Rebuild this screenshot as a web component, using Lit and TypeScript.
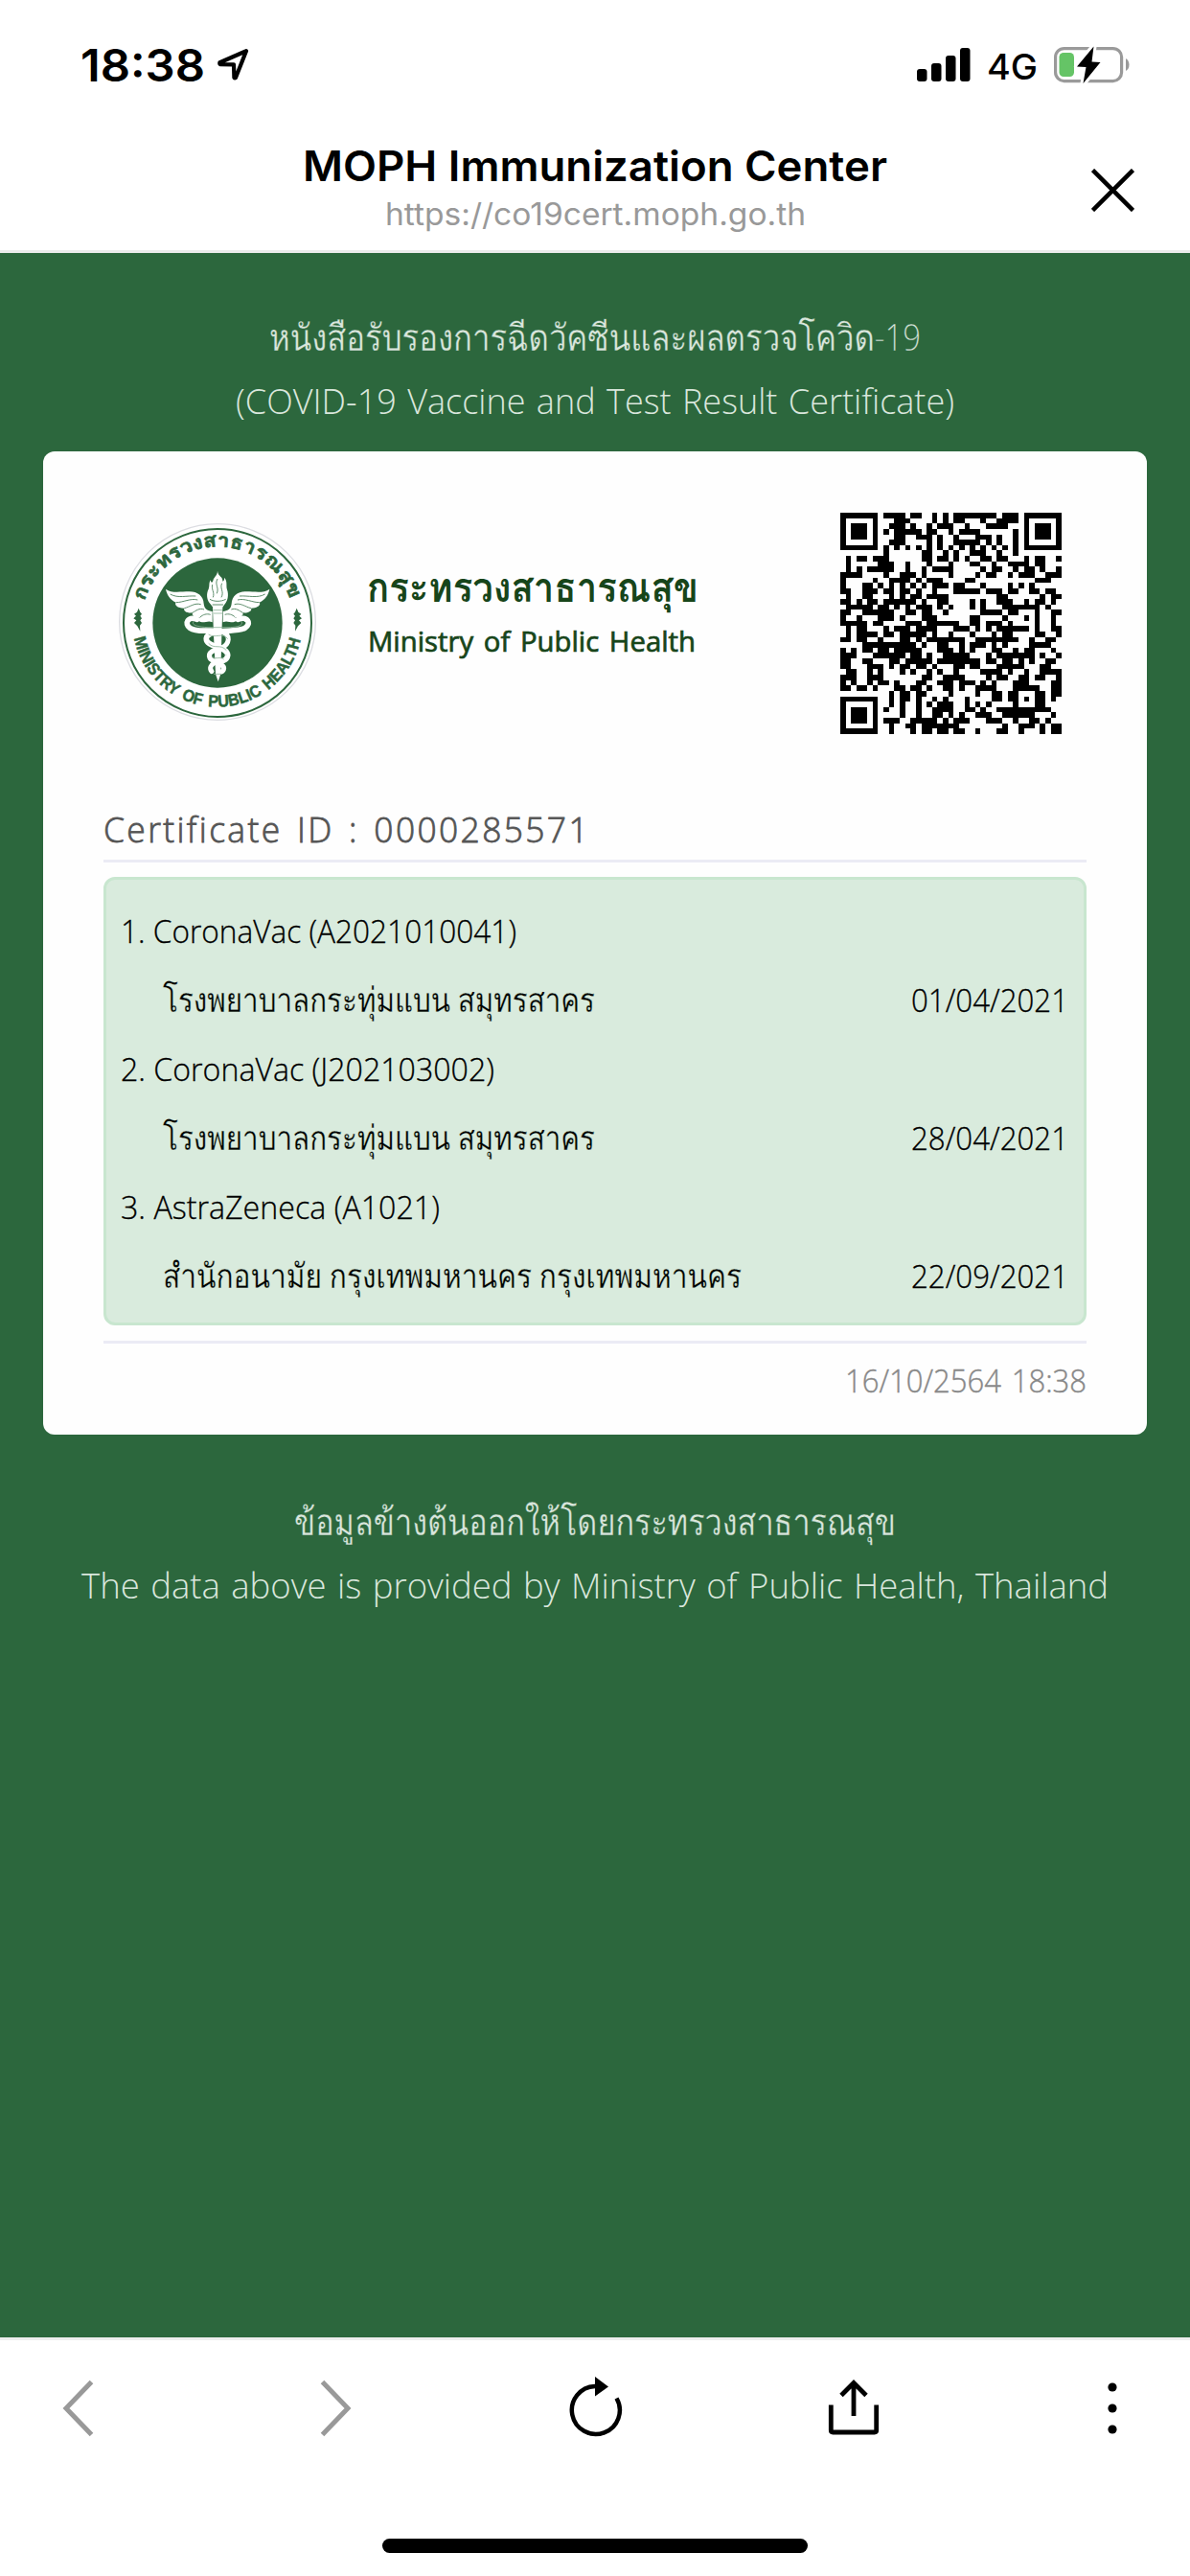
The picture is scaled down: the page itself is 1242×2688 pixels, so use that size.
import { LitElement, html, svg, css } from "lit";
import { customElement, property } from "lit/decorators.js";

/** One line of text drawn to an exact advance width. */
@customElement("fit-line")
export class FitLine extends LitElement {
  @property() text = "";
  @property({ type: Number }) w = 100;
  @property({ type: Number }) h = 66;
  @property({ type: Number }) base = 44;
  static styles = css`
    :host { display: block; flex: none; }
    .line { display: block; overflow: visible; }
    .glyphs { fill: currentColor; white-space: pre; stroke: var(--edge, none); stroke-width: var(--edge-width, 0); }
  `;
  render() {
    return html`<svg class="line" width=${this.w} height=${this.h}>
      <text class="glyphs" x="0" y=${this.base} textLength=${this.w} lengthAdjust="spacingAndGlyphs">${this.text}</text>
    </svg>`;
  }
}

/** QR symbol, version 6 (41 × 41 modules). */
@customElement("qr-code")
export class QrCode extends LitElement {
  static styles = css`
    :host { display: block; }
    .qr { display: block; }
  `;
  private path(): string {
    const n = 41;
    let seed = 20211016;
    const next = () => {
      seed = (Math.imul(seed, 1664525) + 1013904223) >>> 0;
      return seed / 4294967296;
    };
    const ring = (r: number, c: number, size: number) =>
      Math.min(r, c, size - 1 - r, size - 1 - c) !== 1;
    let d = "";
    for (let r = 0; r < n; r++) {
      for (let c = 0; c < n; c++) {
        let on = next() < 0.52;
        if (r === 6) on = c % 2 === 0;
        if (c === 6) on = r % 2 === 0;
        if (r >= 32 && r <= 36 && c >= 32 && c <= 36) on = ring(r - 32, c - 32, 5);
        for (const [r0, c0] of [[0, 0], [0, n - 7], [n - 7, 0]]) {
          const y = r - r0, x = c - c0;
          if (y >= -1 && y <= 7 && x >= -1 && x <= 7) {
            on = y >= 0 && y <= 6 && x >= 0 && x <= 6 && ring(y, x, 7);
          }
        }
        if (on) d += `M${c} ${r}h1v1h-1z`;
      }
    }
    return d;
  }
  render() {
    return html`<svg class="qr" width="231" height="231" viewBox="0 0 41 41" shape-rendering="crispEdges">
      <path d=${this.path()} />
    </svg>`;
  }
}

/** Seal of the Ministry of Public Health. */
@customElement("moph-seal")
export class MophSeal extends LitElement {
  static styles = css`
    :host { display: block; }
    .seal { display: block; }
    .thai { font: 700 60px Loma, Garuda, Waree, "Noto Sans Thai Looped", "Noto Sans Thai", sans-serif; fill: #2c673d; stroke: #2c673d; stroke-width: 2; }
    .latin { font: 700 52px "Liberation Sans", sans-serif; fill: #2c673d; stroke: #2c673d; stroke-width: 1.5; word-spacing: 8px; }
  `;
  private wing() {
    return svg`
      <path fill="#fff" d="M218 254 C236 268 262 262 292 262 C318 262 336 276 337 300 C339 318 350 322 364 324 L364 358
        C352 352 346 358 332 358 C318 356 320 346 326 342 C310 344 298 338 302 328 C284 330 272 322 276 314
        C254 314 244 302 250 296 C230 286 222 272 218 254Z"/>
      <path fill="none" stroke="#5d8d6b" stroke-width="3" d="M232 270 C256 284 284 274 312 276 M250 296 C272 296 296 282 318 288
        M276 314 C294 310 308 296 328 302 M302 328 C312 322 324 312 338 318 M326 342 C334 334 346 330 358 334"/>`;
  }
  render() {
    return html`<svg class="seal" width="208" height="208" viewBox="68 48 624 624">
      <defs>
        <path id="top" d="M151 292 A239 239 0 0 1 609 292"/>
        <path id="bottom" d="M119 408 A266 266 0 0 0 641 408"/>
      </defs>
      <circle cx="380" cy="357" r="307" fill="#fff" stroke="#dcdde2" stroke-width="4"/>
      <circle cx="380" cy="360" r="294" fill="#fff" stroke="#2c673d" stroke-width="6"/>
      <circle cx="380" cy="360" r="203" fill="#2c673d"/>
      <text class="thai"><textPath href="#top" textLength="606" lengthAdjust="spacingAndGlyphs">กระทรวงสาธารณสุข</textPath></text>
      <text class="latin"><textPath href="#bottom" textLength="728" lengthAdjust="spacingAndGlyphs">MINISTRY OF PUBLIC HEALTH</textPath></text>
      <g fill="#2c673d">
        <path d="M133 314 L138 326 L143 332 L138 338 L143 346 L138 352 L143 360 L137 368 L138 386 L129 370 L119 360 L126 352 L117 346 L125 338 L119 332 L128 326Z"/>
        <path d="M628 314 L623 326 L618 332 L623 338 L618 346 L623 352 L618 360 L624 368 L623 386 L632 370 L642 360 L635 352 L644 346 L636 338 L642 332 L633 326Z"/>
      </g>
      <g>${this.wing()}</g>
      <g transform="matrix(-1 0 0 1 761 0)">${this.wing()}</g>
      <path fill="none" stroke="#fff" stroke-width="17" stroke-linecap="round" d="M316 349 C288 338 274 362 294 376 C318 392 356 380 382 386"/>
      <path fill="none" stroke="#fff" stroke-width="17" stroke-linecap="round" d="M444 349 C474 338 488 362 466 376 C440 392 350 376 345 408 C342 438 414 432 412 462 C410 478 392 482 380 480"/>
      <path fill="none" stroke="#fff" stroke-width="15" stroke-linecap="round" d="M392 388 C424 396 418 428 392 438 C366 446 348 452 356 470 C364 484 400 486 400 502 C400 510 394 514 386 514 M372 484 C358 492 354 502 362 512"/>
      <path fill="#fff" d="M365 312 H396 L393 400 L390 520 L382 544 L374 520 L368 400Z"/>
      <path fill="none" stroke="#8fb49a" stroke-width="2.5" d="M366 320 H395 M367 330 H395 M352 396 C372 410 396 388 412 410 M352 424 C370 444 390 424 408 446 M362 464 C376 478 388 462 400 474 M368 520 H392 M306 354 C296 366 314 372 350 374 L420 374 C450 372 462 366 454 354"/>
      <path fill="#fff" d="M380 197 C382 216 398 214 396 230 C402 228 401 222 402 218 C412 232 406 242 410 256 C416 272 412 292 402 302 L394 314 H368 L359 302
        C346 290 344 268 352 254 C356 244 352 236 358 226 C360 236 364 234 366 228 C368 216 380 212 380 197Z"/>
      <path fill="none" stroke="#5d8d6b" stroke-width="3" d="M380 222 C370 240 386 248 378 268 M394 236 C386 252 402 262 392 280 M364 240 C360 256 372 264 366 280 M356 286 C370 294 390 294 406 286 M364 303 H398"/>
    </svg>`;
  }
}

interface Dose { name: string; nameW: number; place: string; placeW: number; date: string; }

const DOSES: Dose[] = [
  { name: "1. CoronaVac (A2021010041)", nameW: 413, place: "โรงพยาบาลกระทุ่มแบน สมุทรสาคร", placeW: 451, date: "01/04/2021" },
  { name: "2. CoronaVac (J202103002)", nameW: 390, place: "โรงพยาบาลกระทุ่มแบน สมุทรสาคร", placeW: 451, date: "28/04/2021" },
  { name: "3. AstraZeneca (A1021)", nameW: 333, place: "สำนักอนามัย กรุงเทพมหานคร กรุงเทพมหานคร", placeW: 604, date: "22/09/2021" },
];

@customElement("app-root")
export class AppRoot extends LitElement {
  static styles = css`
    :host {
      display: flex; flex-direction: column; width: 1242px; height: 2688px; background: #fff; color: #000;
      font-family: "Open Sans", Loma, Garuda, Waree, "Noto Sans Thai Looped", "Noto Sans Thai", sans-serif; font-weight: 300;
    }
    .status { display: flex; height: 120px; padding: 0 61px 0 84px; font-family: Inter, sans-serif; }
    .time { font-size: 47px; font-weight: 600; }
    .arrow { display: block; margin: 50px 0 0 12px; }
    .spacer { flex: 1; }
    .signal { display: block; margin: 50px 17px 0 0; }
    .net { font-size: 37px; font-weight: 450; }
    .battery { display: block; margin: 46px 0 0 16px; }
    .nav { display: grid; grid-template-columns: 1fr auto 1fr; height: 141px; border-bottom: 3px solid #ebebeb; font-family: Inter, sans-serif; }
    .names { grid-column: 2; display: flex; flex-direction: column; align-items: center; }
    .title { font-size: 44px; font-weight: 630; }
    .url { font-size: 32px; font-weight: 400; color: #999; }
    .close { display: block; justify-self: end; margin: 56px 58px 0 0; }
    .page { height: 2117px; padding: 58px 45px 0; background: #2c673d; }
    .lines { display: flex; flex-direction: column; align-items: center; color: #d9e6dc; font-size: 36px; word-spacing: 2px; }
    .lines .thai { font-size: 39px; --edge: #2c673d; --edge-width: 0.3px; }
    .card { height: 1026px; box-sizing: border-box; margin: 17px 0 61px; padding: 0 63px; border-radius: 12px; background: #fefefe; }
    .head { display: flex; align-items: flex-start; height: 359px; }
    .logo { margin: 75px 0 0 15px; }
    .ministry { margin: 113px 0 0 52px; color: #17451a; }
    .ministry-th { font-size: 43px; font-weight: 700; }
    .ministry-en { font-size: 29px; font-weight: 400; margin-left: 1px; word-spacing: 3px; --edge: #17451a; --edge-width: 0.7px; }
    .code { margin: 64px 26px 0 auto; }
    .cert { color: #555; font-size: 36px; font-weight: 300; letter-spacing: 2.4px; word-spacing: 4px; border-bottom: 3px solid #ebebf5; --edge: #555; --edge-width: 0.8px; }
    .doses { margin: 15px 0 16px; padding: 15px 16px 15px 15px; border: 3px solid #c8e6cf; border-radius: 12px; background: #d9ebdd; font-size: 32.5px; --edge: #000; --edge-width: 0.3px; }
    .row { display: flex; justify-content: space-between; }
    .place { padding-left: 44px; font-size: 36px; --edge: #d9ebdd; --edge-width: 0.3px; }
    .stamp { display: flex; justify-content: flex-end; border-top: 3px solid #ebebf5; color: #888; font-size: 33px; word-spacing: 3px; --edge: #888; --edge-width: 0.4px; }
    .tools { display: flex; gap: 210px; height: 71px; padding: 36px 51px 0; border-top: 3px solid #eee; }
    .tool { display: block; flex: none; }
    .home { width: 444px; height: 15px; margin: 100px auto 0; border-radius: 8px; background: #000; }
  `;

  render() {
    return html`
      <header class="status">
        <fit-line class="time" text="18:38" w="130" h="120" base="85"></fit-line>
        <svg class="arrow" width="34" height="36" viewBox="0 0 34 36" fill="none" stroke="#000" stroke-width="4.2" stroke-linejoin="round">
          <path d="M31 3.2 L3.4 15.2 Q3 17 4 17.2 L18 17.4 L18.4 31 Q19 32 20 31Z"/>
        </svg>
        <div class="spacer"></div>
        <svg class="signal" width="56" height="36" viewBox="0 0 56 36">
          <rect x="0" y="22" width="10.5" height="13" rx="3"/><rect x="15" y="16" width="10.5" height="19" rx="3"/>
          <rect x="30" y="8" width="10.5" height="27" rx="3"/><rect x="45" y="0" width="10.5" height="35" rx="3"/>
        </svg>
        <fit-line class="net" text="4G" w="53" h="120" base="83"></fit-line>
        <svg class="battery" width="82" height="44" viewBox="0 0 82 44">
          <rect x="2.6" y="4.6" width="69" height="34" rx="9" fill="none" stroke="#9a9a9a" stroke-width="3.2"/>
          <path d="M76 15 Q79.5 17 79.5 21.5 Q79.5 26 76 28Z" fill="#9a9a9a"/>
          <rect x="6.500" y="9" width="15.500" height="25" rx="4.500" fill="#65c466"/>
          <path d="M42.500 2.500 L25 23.500 L34.500 24 L31.500 41 L49.500 19 L40.500 18.500Z" fill="#000" stroke="#fff" stroke-width="6" paint-order="stroke" stroke-linejoin="round"/>
        </svg>
      </header>
      <nav class="nav">
        <div class="names">
          <fit-line class="title" text="MOPH Immunization Center" w="610" h="78" base="69"></fit-line>
          <fit-line class="url" text="https://co19cert.moph.go.th" w="439" h="60" base="37"></fit-line>
        </div>
        <svg class="close" width="45" height="45" viewBox="0 0 45 45" stroke="#000" stroke-width="4.500">
          <path d="M1.500 1.500 L43.500 43.500 M43.500 1.500 L1.500 43.500"/>
        </svg>
      </nav>
      <main class="page">
        <div class="lines">
          <fit-line class="thai" text="หนังสือรับรองการฉีดวัคซีนและผลตรวจโควิด-19" w="680"></fit-line>
          <fit-line text="(COVID-19 Vaccine and Test Result Certificate)" w="750"></fit-line>
        </div>
        <section class="card">
          <div class="head">
            <moph-seal class="logo"></moph-seal>
            <div class="ministry">
              <fit-line class="ministry-th" text="กระทรวงสาธารณสุข" w="346" h="52" base="44"></fit-line>
              <fit-line class="ministry-en" text="Ministry of Public Health" w="342" h="52" base="44"></fit-line>
            </div>
            <qr-code class="code"></qr-code>
          </div>
          <div class="cert"><fit-line text="Certificate ID : 0000285571" w="508" h="67" base="49"></fit-line></div>
          <div class="doses">
            ${DOSES.map((d) => html`
              <fit-line text=${d.name} .w=${d.nameW} h="72" base="51"></fit-line>
              <div class="row">
                <fit-line class="place" text=${d.place} .w=${d.placeW} h="72" base="51"></fit-line>
                <fit-line text=${d.date} w="164" h="72" base="51"></fit-line>
              </div>`)}
          </div>
          <div class="stamp"><fit-line text="16/10/2564 18:38" w="252" h="90" base="51"></fit-line></div>
        </section>
        <div class="lines">
          <fit-line class="thai" text="ข้อมูลข้างต้นออกให้โดยกระทรวงสาธารณสุข" w="628"></fit-line>
          <fit-line text="The data above is provided by Ministry of Public Health, Thailand" w="1072"></fit-line>
        </div>
      </main>
      <footer class="tools">
        <svg class="tool" width="60" height="70" fill="none" stroke="#999" stroke-width="5"><path d="M44.500 7.500 L18 35 L44.500 62.500"/></svg>
        <svg class="tool" width="60" height="70" fill="none" stroke="#999" stroke-width="5"><path d="M15.500 7.500 L42 35 L15.500 62.500"/></svg>
        <svg class="tool" width="60" height="70" fill="none" stroke="#000" stroke-width="4.500">
          <path d="M31 12 H30 A25 25 0 1 0 52.500 24.500"/><path d="M30 2 L44 12.500 L30 22.500Z" fill="#000" stroke="none"/>
        </svg>
        <svg class="tool" width="60" height="70" fill="none" stroke="#000" stroke-width="4.800">
          <path d="M6.300 31.500 V58 Q6.300 60 8.300 60 H51.700 Q53.700 60 53.700 58 V31.500 M30 43 V9 M17 21.500 L30 8.500 L43 21.500"/>
        </svg>
        <svg class="tool" width="60" height="70"><circle cx="30" cy="13" r="4.600"/><circle cx="30" cy="35" r="4.600"/><circle cx="30" cy="57" r="4.600"/></svg>
      </footer>
      <div class="home"></div>`;
  }
}
